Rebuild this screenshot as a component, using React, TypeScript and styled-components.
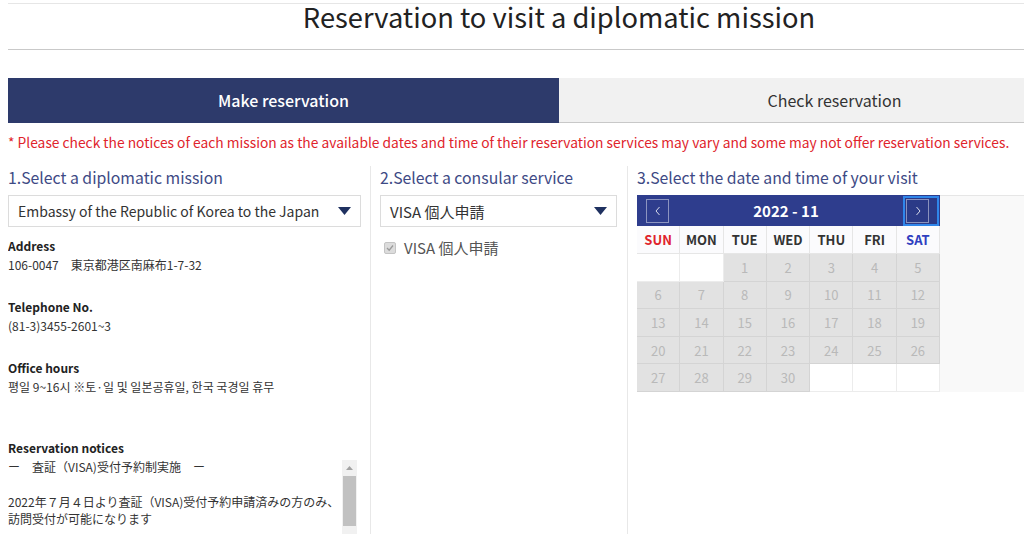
import React from "react";
import styled, { createGlobalStyle } from "styled-components";

const GlobalStyle = createGlobalStyle`
  html, body {
    margin: 0;
    padding: 0;
    overflow: hidden;
    background: #ffffff;
  }
  body {
    font-family: "Noto Sans CJK JP", "Noto Sans CJK KR", "Noto Sans", sans-serif;
    color: #333;
  }
`;

const Page = styled.div`
  width: 1102px;
  height: 534px;
  margin-left: 8px;
  overflow: hidden;
`;

const TitleBar = styled.div`
  margin-top: 3px;
  border-top: 1px solid #e6e6e6;
  border-bottom: 1px solid #c9c9c9;
  height: 45px;
  display: flex;
  justify-content: center;
  align-items: center;
`;

const Title = styled.h1`
  margin: 0;
  font-size: 27.3px;
  font-weight: 400;
  color: #222;
  line-height: 1;
  white-space: nowrap;
  transform: translateY(-10px);
`;

const Tabs = styled.div`
  margin-top: 28px;
  display: grid;
  grid-template-columns: 551px 1fr;
  height: 45px;
`;

const Tab = styled.div<{ $active?: boolean }>`
  display: flex;
  align-items: center;
  justify-content: center;
  font-size: 16px;
  font-weight: ${(p) => (p.$active ? 500 : 400)};
  background: ${(p) => (p.$active ? "#2d3a6b" : "#f1f1f1")};
  color: ${(p) => (p.$active ? "#ffffff" : "#333")};
  border-bottom: 1px solid ${(p) => (p.$active ? "#2d3a6b" : "#c8c8c8")};
  box-sizing: border-box;
`;

const Notice = styled.p`
  margin: 9px 0 0;
  font-size: 13.8px;
  line-height: 20px;
  color: #e0242c;
  white-space: nowrap;
`;

const Columns = styled.div`
  margin-top: 14px;
  display: grid;
  grid-template-columns: 362px 257px 1fr;
  height: 400px;
`;

const Column = styled.section<{ $divided?: boolean; $pl: number; $pr: number }>`
  box-sizing: border-box;
  min-width: 0;
  padding-left: ${(p) => p.$pl}px;
  padding-right: ${(p) => p.$pr}px;
  border-left: ${(p) => (p.$divided ? "1px solid #e8e8e8" : "none")};
`;

const StepHeading = styled.h2`
  margin: 0;
  font-size: 15.8px;
  line-height: 24px;
  font-weight: 400;
  color: #3e4a85;
  white-space: nowrap;
`;

const SelectBox = styled.div<{ $size: number }>`
  margin-top: 5px;
  height: 32px;
  box-sizing: border-box;
  border: 1px solid #dcdcdc;
  background: #fff;
  display: flex;
  align-items: center;
  justify-content: space-between;
  padding: 0 9px 0 9px;
  font-size: ${(p) => p.$size}px;
  color: #333;
  white-space: nowrap;
`;

const Caret = styled.svg`
  width: 13px;
  height: 8px;
  flex: none;
`;

const InfoList = styled.div`
  margin-top: 10px;
`;

const InfoItem = styled.div<{ $after: number }>`
  margin-bottom: ${(p) => p.$after}px;
  font-size: 12px;
  line-height: 18.5px;
`;

const InfoLabel = styled.div`
  font-weight: 700;
  color: #222;
`;

const InfoValue = styled.div`
  color: #333;
  white-space: pre;
`;

const NoticeBox = styled.div`
  width: 349px;
  height: 160px;
  display: flex;
  overflow: hidden;
`;

const NoticeText = styled.div`
  flex: 1;
  font-size: 12px;
  line-height: 17.5px;
  color: #333;
  white-space: pre-line;
`;

const ScrollTrack = styled.div`
  width: 15px;
  margin-top: 2px;
  flex: none;
  background: #f1f1f1;
  display: flex;
  flex-direction: column;
  align-items: center;
`;

const ScrollArrow = styled.div`
  height: 16px;
  display: flex;
  align-items: center;
  justify-content: center;
`;

const ScrollThumb = styled.div`
  width: 13px;
  height: 50px;
  background: #c1c1c1;
`;

const CheckRow = styled.label`
  margin-top: 10px;
  display: flex;
  align-items: center;
  gap: 8px;
  padding-left: 4px;
  font-size: 15px;
  line-height: 22px;
  color: #555;
`;

const CheckBox = styled.span`
  width: 10px;
  height: 10px;
  border: 1px solid #c4c4c4;
  background: #dcdcdc;
  border-radius: 2px;
  display: inline-flex;
  align-items: center;
  justify-content: center;
`;

const CalendarArea = styled.div`
  margin-top: 5px;
  display: flex;
`;

const Calendar = styled.div`
  width: 303px;
  flex: none;
`;

const CalHeader = styled.div`
  height: 31px;
  background: #2e3d8d;
  display: flex;
  align-items: center;
  justify-content: space-between;
  padding: 0 0 0 9px;
`;

const CalTitle = styled.div`
  color: #fff;
  font-weight: 700;
  font-size: 15px;
`;

const NavButton = styled.div`
  width: 21px;
  height: 22px;
  border: 1px solid rgba(255, 255, 255, 0.45);
  display: flex;
  align-items: center;
  justify-content: center;
  color: #fff;
`;

const FocusRing = styled.div`
  border: 2px solid #2f86ea;
  padding: 1px 8px 1px 1px;
  margin-right: 1px;
  background: #2b3a87;
`;

const DayGrid = styled.div`
  display: grid;
  grid-template-columns: repeat(7, 1fr);
`;

const DowCell = styled.div<{ $color: string }>`
  height: 28px;
  box-sizing: border-box;
  border-right: 1px solid #e6e6e6;
  border-bottom: 1px solid #e6e6e6;
  background: #fbfbfd;
  display: flex;
  align-items: center;
  justify-content: center;
  font-size: 13px;
  font-weight: 700;
  color: ${(p) => p.$color};
`;

const DateCell = styled.div<{ $empty?: boolean }>`
  height: 27.6px;
  box-sizing: border-box;
  border-right: 1px solid ${(p) => (p.$empty ? "#ececec" : "#d4d4d4")};
  border-bottom: 1px solid ${(p) => (p.$empty ? "#ececec" : "#d4d4d4")};
  background: ${(p) => (p.$empty ? "#ffffff" : "#e2e2e2")};
  display: flex;
  align-items: center;
  justify-content: center;
  font-size: 13px;
  color: #b9b9b9;
`;

const TimePanel = styled.div`
  flex: 1;
  height: 197px;
  background: #f9f9f9;
  border-top: 1px solid #e6e6e6;
  box-sizing: border-box;
`;

const Chevron = ({ dir }: { dir: "left" | "right" }) => (
  <svg width="8" height="10" viewBox="0 0 8 10">
    <path
      d={dir === "left" ? "M5.5 1 L2 5 L5.5 9" : "M2.5 1 L6 5 L2.5 9"}
      fill="none"
      stroke="rgba(255,255,255,0.8)"
      strokeWidth="1"
    />
  </svg>
);

const CaretIcon = () => (
  <Caret viewBox="0 0 13 8">
    <path d="M0 0 H13 L6.5 8 Z" fill="#1f3160" />
  </Caret>
);

const dows: { label: string; color: string }[] = [
  { label: "SUN", color: "#e0242c" },
  { label: "MON", color: "#333" },
  { label: "TUE", color: "#333" },
  { label: "WED", color: "#333" },
  { label: "THU", color: "#333" },
  { label: "FRI", color: "#333" },
  { label: "SAT", color: "#2f3fc0" },
];

const cells: (number | null)[] = [
  null, null, 1, 2, 3, 4, 5,
  6, 7, 8, 9, 10, 11, 12,
  13, 14, 15, 16, 17, 18, 19,
  20, 21, 22, 23, 24, 25, 26,
  27, 28, 29, 30, null, null, null,
];

export default function App() {
  return (
    <>
      <GlobalStyle />
      <Page>
        <TitleBar>
          <Title>Reservation to visit a diplomatic mission</Title>
        </TitleBar>
        <Tabs>
          <Tab $active>Make reservation</Tab>
          <Tab>Check reservation</Tab>
        </Tabs>
        <Notice>
          * Please check the notices of each mission as the available dates and time of their
          reservation services may vary and some may not offer reservation services.
        </Notice>
        <Columns>
          <Column $pl={0} $pr={9}>
            <StepHeading>1.Select a diplomatic mission</StepHeading>
            <SelectBox $size={14}>
              <span>Embassy of the Republic of Korea to the Japan</span>
              <CaretIcon />
            </SelectBox>
            <InfoList>
              <InfoItem $after={24}>
                <InfoLabel>Address</InfoLabel>
                <InfoValue>106-0047　東京都港区南麻布1-7-32</InfoValue>
              </InfoItem>
              <InfoItem $after={24}>
                <InfoLabel>Telephone No.</InfoLabel>
                <InfoValue>(81-3)3455-2601~3</InfoValue>
              </InfoItem>
              <InfoItem $after={43}>
                <InfoLabel>Office hours</InfoLabel>
                <InfoValue>평일 9~16시 ※토·일 및 일본공휴일, 한국 국경일 휴무</InfoValue>
              </InfoItem>
              <InfoItem $after={0}>
                <InfoLabel>Reservation notices</InfoLabel>
              </InfoItem>
            </InfoList>
            <NoticeBox>
              <NoticeText>
                {"ー　査証（VISA)受付予約制実施　ー\n\n2022年７月４日より査証（VISA)受付予約申請済みの方のみ、\n訪問受付が可能になります\n\n予約は下記の通りです。"}
              </NoticeText>
              <ScrollTrack>
                <ScrollArrow>
                  <svg width="7" height="4" viewBox="0 0 7 4">
                    <path d="M0 4 L3.5 0 L7 4 Z" fill="#a3a3a3" />
                  </svg>
                </ScrollArrow>
                <ScrollThumb />
              </ScrollTrack>
            </NoticeBox>
          </Column>
          <Column $divided $pl={9} $pr={10}>
            <StepHeading>2.Select a consular service</StepHeading>
            <SelectBox $size={15}>
              <span>VISA 個人申請</span>
              <CaretIcon />
            </SelectBox>
            <CheckRow>
              <CheckBox>
                <svg width="8" height="8" viewBox="0 0 8 8">
                  <path d="M1 4 L3.2 6.2 L7 1.5" fill="none" stroke="#9a9a9a" strokeWidth="1.3" />
                </svg>
              </CheckBox>
              VISA 個人申請
            </CheckRow>
          </Column>
          <Column $divided $pl={9} $pr={0}>
            <StepHeading>3.Select the date and time of your visit</StepHeading>
            <CalendarArea>
              <Calendar>
                <CalHeader>
                  <NavButton>
                    <Chevron dir="left" />
                  </NavButton>
                  <CalTitle>2022 - 11</CalTitle>
                  <FocusRing>
                    <NavButton>
                      <Chevron dir="right" />
                    </NavButton>
                  </FocusRing>
                </CalHeader>
                <DayGrid>
                  {dows.map((d) => (
                    <DowCell key={d.label} $color={d.color}>
                      {d.label}
                    </DowCell>
                  ))}
                  {cells.map((c, i) => (
                    <DateCell key={i} $empty={c === null}>
                      {c ?? ""}
                    </DateCell>
                  ))}
                </DayGrid>
              </Calendar>
              <TimePanel />
            </CalendarArea>
          </Column>
        </Columns>
      </Page>
    </>
  );
}
